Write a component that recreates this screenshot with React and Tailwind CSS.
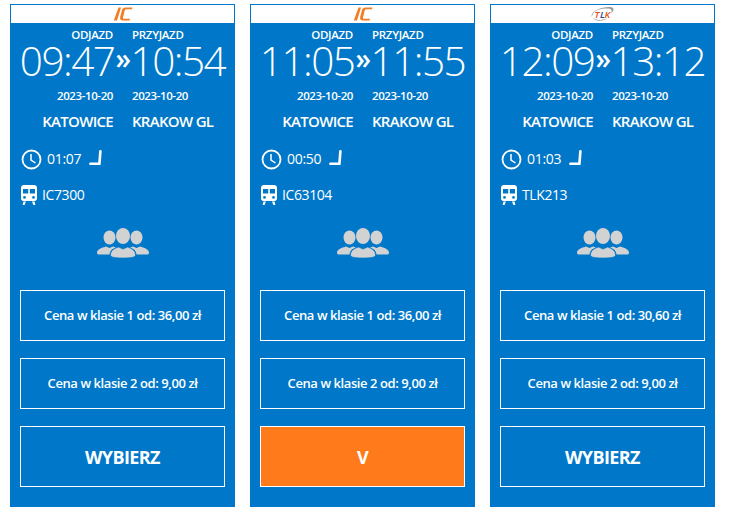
import React from "react";

const trains = [
  { logo: "ic", dep: "09:47", arr: "10:54", time: "01:07", no: "IC7300", first: "36,00", action: "WYBIERZ" },
  { logo: "ic", dep: "11:05", arr: "11:55", time: "00:50", no: "IC63104", first: "36,00", action: "V" },
  { logo: "tlk", dep: "12:09", arr: "13:12", time: "01:03", no: "TLK213", first: "30,60", action: "WYBIERZ" },
];

const IcLogo = () => (
  <svg width="20" height="14" viewBox="0 0 20 14">
    <path d="M5.5 0.5H8L4 13.5H0.8Z" fill="#f47b20" />
    <path d="M19.5 0.5H12.5C10.5 0.5 9.5 1.5 9 3L7.2 10C6.7 12 7.6 13.5 10 13.5H16.5L17 11.8H10.8C10 11.8 9.8 11.2 10 10.4L11.6 3.8C11.9 2.7 12.4 2.2 13.4 2.2H19Z" fill="#f47b20" />
  </svg>
);

const TlkLogo = () => (
  <svg width="26" height="16" viewBox="0 0 26 16">
    <path d="M2 11C0 6 10 1 20 1C25 1 24 5 21 7C23 3 20 2 15 2.5C8 3 2 6 2 11Z" fill="#999" />
    <path d="M3 12C6 16 14 15 18 12C14 14 7 15 3 12Z" fill="#999" />
    <text x="4.5" y="12" fontSize="9.5" fontStyle="italic" fontWeight="600" fontFamily="'Open Sans', sans-serif" fill="#e8500a">T</text>
    <text x="10" y="12" fontSize="9.5" fontStyle="italic" fontWeight="600" fontFamily="'Open Sans', sans-serif" fill="#1a3fa0">L</text>
    <text x="14.5" y="12" fontSize="9.5" fontStyle="italic" fontWeight="600" fontFamily="'Open Sans', sans-serif" fill="#e8500a">K</text>
  </svg>
);

const ClockIcon = () => (
  <svg width="21" height="21" viewBox="0 0 21 21" fill="none" stroke="white">
    <circle cx="10.5" cy="10.5" r="9" strokeWidth="1.8" />
    <path d="M10 5V11L14.5 14" strokeWidth="1.5" />
  </svg>
);

const SeatIcon = () => (
  <svg width="13" height="16" viewBox="0 0 13 16" fill="none" stroke="white" strokeWidth="2.6" strokeLinejoin="round" strokeLinecap="round">
    <path d="M11.4 1.4L10.4 13.8H1.4" />
  </svg>
);

const TrainIcon = () => (
  <svg width="16" height="20" viewBox="0 0 16 20" fill="white">
    <path fillRule="evenodd" d="M3 0H13C14.8 0 16 1.2 16 3V13.5C16 15 15 16 13.5 16H2.5C1 16 0 15 0 13.5V3C0 1.2 1.2 0 3 0ZM2 4V8.5H7.2V4ZM8.8 4V8.5H14V4ZM3.5 11A1.4 1.4 0 1 0 3.5 13.8A1.4 1.4 0 1 0 3.5 11ZM12.5 11A1.4 1.4 0 1 0 12.5 13.8A1.4 1.4 0 1 0 12.5 11Z" />
    <path d="M2.5 16.5H5L3.6 20H1.6ZM11 16.5H13.5L14.4 20H12.4Z" />
  </svg>
);

const GroupIcon = () => (
  <svg width="52" height="30" viewBox="0 0 52 30" fill="#d2d2d2">
    <ellipse cx="12.5" cy="9.5" rx="6" ry="7" />
    <ellipse cx="39.5" cy="9.5" rx="6" ry="7" />
    <path d="M0 25C0 21 5 19.5 9 18.5L12.5 20L16 18.5L19 19.5C15 21 13 22.5 12.5 26.5H3C1 26.5 0 26 0 25Z" />
    <path d="M52 25C52 21 47 19.5 43 18.5L39.5 20L36 18.5L33 19.5C37 21 39 22.5 39.5 26.5H49C51 26.5 52 26 52 25Z" />
    <ellipse cx="26" cy="8" rx="7" ry="8" />
    <path d="M13.5 27C13.5 22.5 17 20.5 21.5 19L26 21L30.5 19C35 20.5 38.5 22.5 38.5 27C38.5 29 36 30 26 30C16 30 13.5 29 13.5 27Z" stroke="#0077c8" strokeWidth="0.7" />
  </svg>
);

const PriceBox = ({ children }) => (
  <div className="h-[51px] pt-[1px] border border-white flex items-center justify-center text-[13px] font-semibold tracking-[-0.42px] text-white">
    {children}
  </div>
);

// left column ends at x=103, right one starts at x=122 inside the card
const TwoCols = ({ className, left, right }) => (
  <div className={"flex gap-[19px] leading-none " + className}>
    <span className="w-[103px] text-right">{left}</span>
    <span>{right}</span>
  </div>
);

const TrainCard = ({ train }) => (
  <div className="w-[225px] h-[503px] bg-[#0077c8] text-white flex flex-col">
    <div className="h-[20px] bg-white border border-[#0077c8] flex items-center justify-center">
      {train.logo === "ic" ? <IcLogo /> : <TlkLogo />}
    </div>

    <TwoCols
      className="text-[11.5px] font-semibold tracking-[-0.3px] mt-[5px]"
      left="ODJAZD"
      right="PRZYJAZD"
    />

    <div className="flex justify-center items-center text-[40.5px] font-light tracking-[-1.5px] leading-none mt-[1px] h-[40px]">
      <span>{train.dep}</span>
      <span className="font-semibold text-[28px] mx-[1px] -mt-2">»</span>
      <span>{train.arr}</span>
    </div>

    <TwoCols
      className="text-[11.5px] font-semibold tracking-[-0.4px] mt-[8px]"
      left="2023-10-20"
      right="2023-10-20"
    />

    <TwoCols
      className="text-[15px] font-semibold tracking-[-0.7px] mt-[13px]"
      left="KATOWICE"
      right="KRAKOW GL"
    />

    <div className="flex items-center mt-[20px] pl-[11px] h-[21px]">
      <ClockIcon />
      <span className="text-[14px] tracking-[-0.3px] ml-[5px] -mt-[3px]">{train.time}</span>
      <span className="ml-[8px] flex -mt-[3px]"><SeatIcon /></span>
    </div>

    <div className="flex items-center mt-[15px] pl-[11px] h-[20px]">
      <TrainIcon />
      <span className="text-[14px] tracking-[-0.4px] ml-[5px] -mt-[2px]">{train.no}</span>
    </div>

    <div className="flex justify-center mt-[23px]">
      <GroupIcon />
    </div>

    <div className="flex flex-col px-[10px] mt-[32px]">
      <PriceBox>Cena w klasie 1 od: {train.first} zł</PriceBox>
      <div className="mt-[17px]">
        <PriceBox>Cena w klasie 2 od: 9,00 zł</PriceBox>
      </div>
      <div
        className={
          train.action === "V"
            ? "mt-[17px] h-[61px] pt-[1px] border border-white bg-[#ff7a1a] flex items-center justify-center text-[18px] font-bold tracking-[-0.6px]"
            : "mt-[17px] h-[61px] pt-[1px] border border-white flex items-center justify-center text-[18px] font-bold tracking-[-0.6px]"
        }
      >
        {train.action}
      </div>
    </div>
  </div>
);

export default function App() {
  return (
    <div className="w-[732px] h-[521px] bg-white pt-[4px] pl-[10px] flex gap-[15px] font-['Open_Sans',sans-serif]">
      {trains.map((t) => (
        <TrainCard key={t.no} train={t} />
      ))}
    </div>
  );
}
